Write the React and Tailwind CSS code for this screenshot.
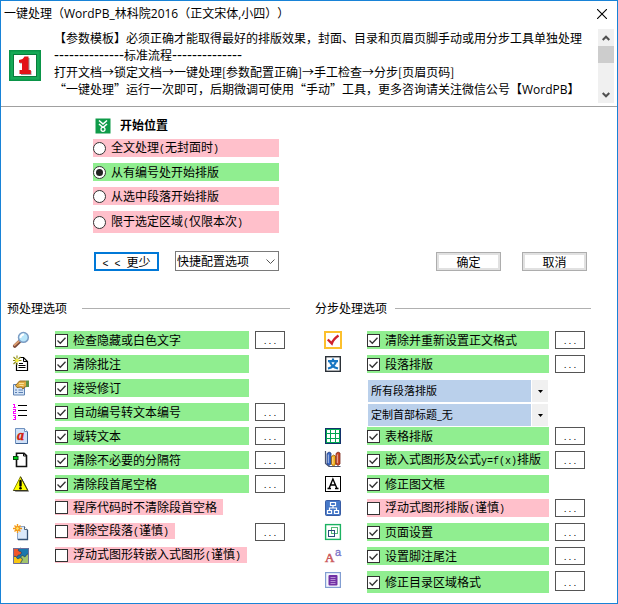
import React from 'react';

const UI = "font-['Open_Sans','Noto_Sans_CJK_SC',sans-serif]";
const CJK = "font-['Noto_Sans_CJK_SC',sans-serif]";

/* Half-width characters take exactly half of a 12px ideograph. */
function Label({ children }) {
  return (
    <span className="whitespace-pre">
      {children.split(/([\x20-\x7e]+)/).map((part, i) =>
        i % 2 ? (
          <span key={i} className="font-['Liberation_Mono',monospace] text-[10px]">{part}</span>
        ) : (
          part
        )
      )}
    </span>
  );
}

function Svg({ children, crisp }) {
  return (
    <svg viewBox="0 0 16 16" className="size-4 shrink-0 overflow-visible" aria-hidden="true" shapeRendering={crisp ? 'crispEdges' : 'auto'}>
      {children}
    </svg>
  );
}

const icons = {
  magnifier: (
    <Svg>
      <path d="M6.5 9.5 1.8 14" stroke="#7d4a3a" strokeWidth="3.8" strokeLinecap="round" />
      <path d="M6 9.2 1.6 13.2" stroke="#e0a070" strokeWidth="1.8" strokeLinecap="round" />
      <circle cx="10.4" cy="5.4" r="4.9" fill="#b9e6fa" stroke="#7c9dc4" strokeWidth="1.5" />
      <path d="M7.6 6a3 3 0 0 1 3.4-3.4" stroke="#fff" strokeWidth="2" fill="none" />
    </Svg>
  ),
  newNote: (
    <Svg>
      <path d="M7 1.5h3.500l4 4v9h-11V7" fill="#fff" stroke="#000" strokeWidth="1.2" />
      <path d="M10.500 1.500v4h4" fill="none" stroke="#000" />
      <path d="M6 7.500h4M5.500 9.500h7M5.500 11.500h7" stroke="#000" />
      <path d="M0 4.500h2.500M5.500 4.500h3M4 -.5v3M4 6.500v2.500M.5 1l2.500 2.500M7.500 1 5.500 3M.5 8l2.500-2.500" stroke="#8c8c14" strokeWidth="1.100" />
      <rect x="2.500" y="3" width="3" height="3" fill="#f5f03c" />
    </Svg>
  ),
  accept: (
    <Svg>
      <path d="M.5 4.5h11v10.500h-11z" fill="#d3e3f6" stroke="#5f82b3" />
      <path d="M2 10h2M5.500 10H10M2 12.500h2M5.500 12.500H10" stroke="#5b80b4" strokeWidth="1.200" />
      <path d="M2.500 5.500 6.500 1h6l1.500 1v4.500l-2.500.5-1.500 2-1.500-2L4 7.500z" fill="#e2ae43" stroke="#8a5f17" strokeWidth=".9" />
      <path d="M6 3.500h5M6.500 5.500h4" stroke="#fbe19a" />
      <path d="M13 .5h3v6.500h-3z" fill="#5f9147" />
    </Svg>
  ),
  numbers: (
    <Svg crisp>
      <path d="M1 0h1v3h1v1H0V3h1V1H0V0zM0 5h3v3H1v1h2v1H0V7h2V6H0zM0 11h3v5H0v-1h2v-1H1v-1h1v-1H0z" fill="#f0f" />
      <path d="M5 1h9v1H5zM5 6h9v1H5zM5 11h9v1H5z" fill="#000" />
    </Svg>
  ),
  field: (
    <Svg>
      <path d="M2.500.5h9l3 3v12h-12z" fill="#cfe1f8" stroke="#6f91bf" />
      <path d="M14.500 4v11.500H3" fill="none" stroke="#3f6497" />
      <path d="M11.500.5v3h3" fill="#fff" stroke="#6f91bf" />
      <text x="4" y="12" fontSize="14" fontWeight="700" fontStyle="italic" fontFamily="Liberation Serif, serif" fill="#d0220d" stroke="#d0220d" strokeWidth=".4">a</text>
    </Svg>
  ),
  breaks: (
    <Svg>
      <path d="M3.500 1.200h7.500l2.500 2.500v10.800h-10z" fill="#fff" stroke="#111" strokeWidth="1.600" />
      <path d="M10.500 1.500v2.500h2.500" fill="none" stroke="#111" />
      <rect x=".5" y="4.500" width="4.500" height="3" fill="#00d21a" stroke="#064b0b" />
    </Svg>
  ),
  warning: (
    <Svg>
      <path d="M9 2.500 16 15.800H2z" fill="#777" />
      <path d="M7.500.7 14.800 14.500H.4z" fill="#ff0" stroke="#8b8b00" />
      <path d="m7.500.7 7.300 13.800H.4" fill="none" stroke="#222" strokeWidth=".8" />
      <path d="M7.500 5v4.500" stroke="#000" strokeWidth="2.400" strokeLinecap="round" />
      <circle cx="7.500" cy="12.200" r="1.300" />
    </Svg>
  ),
  blank: (
    <Svg>
      <path d="M4.500 2.500h7l3 3v10h-10z" fill="#dbe9fa" stroke="#8fa6c8" />
      <path d="M14.500 6v9.500H5" fill="none" stroke="#345275" strokeWidth="1.300" />
      <path d="M11.500 2.500v3h3" fill="#fff" stroke="#567" />
      <path d="M4.500 0v9M0 4.500h9M1.500 1.500l6 6M7.500 1.500l-6 6" stroke="#f59b17" strokeWidth="1.400" />
      <circle cx="4.500" cy="4.500" r="1.900" fill="#ffe25e" stroke="#f08c12" />
    </Svg>
  ),
  puzzle: (
    <Svg>
      <path d="M0 0h16v16H0z" fill="#1977ae" />
      <path d="M0 0h7.500c-3 1.500-3 3 0 3.500 1.500.5 1 3-1 3.500-2 0-2 1-2.500 2C3 7.500 1.500 8 0 9z" fill="#f0562b" />
      <path d="M0 9c1.500-1 3-1 3.500.5s2 1.500 3 .5c2-1 3.500 1 2.500 2.500S7.500 14.500 8 16H0z" fill="#f8c713" />
      <path d="M8 16c-.5-1.500.5-2.500 1-3.500.8-1.500-.5-3-1.500-3.500 1-1.500 2-2 3-1 .8 1 2 1 2.500-.5S15 6 16 6v10z" fill="#a2c46c" />
      <path d="M7.500 0c-3 1.500-3 3 0 3.500 1.500.5 1 3-1 3.500-2 0-2 1-2.500 2M0 9c1.500-1 3-1 3.500.5s2 1.500 3 .5c2-1 3.500 1 2.500 2.500S7.500 14.500 8 16M7.500 9c1-1.500 2-2 3-1 .8 1 2 1 2.500-.5S15 6 16 6" fill="none" stroke="#284866" strokeWidth=".9" />
      <path d="M.5.5h15v15H.5z" fill="none" stroke="#6a6f9e" />
    </Svg>
  ),
  redCheck: (
    <Svg>
      <rect x="0" y="0" width="16" height="16" fill="#fff" stroke="#fcc02d" strokeWidth="2" />
      <path d="m2.800 7.500 4 4C8 8 10.500 5.500 13.500 3.500" fill="none" stroke="#cf202b" strokeWidth="2.400" />
    </Svg>
  ),
  wen: (
    <Svg>
      <rect x=".7" y=".7" width="14.600" height="14.600" fill="#fff" stroke="#2b3138" strokeWidth="1.400" />
      <path d="M3 5.200h10M8 2.500V5M5 5.500c1 4 4 6 8 7M11 5.500c-1 4-4 6-8 7" fill="none" stroke="#1775c2" strokeWidth="2.200" />
    </Svg>
  ),
  table: (
    <Svg crisp>
      <path d="M0 0h16v16H0z" fill="#12326b" />
      <path d="M1 1h14v14H1z" fill="#00a650" />
      <path d="M2 2h3v3H2zM6 2h4v3H6zM11 2h3v3h-3zM2 6h3v4H2zM6 6h4v4H6zM11 6h3v4h-3zM2 11h3v3H2zM6 11h4v3H6zM11 11h3v3h-3z" fill="#fff" />
    </Svg>
  ),
  chart: (
    <Svg>
      <path d="M.5-1v12.500l3.500 3H15.500" fill="none" stroke="#4a5470" strokeWidth="1.200" />
      <path d="M2 1.500 4 0l2 1v11l-2 1.500L2 12z" fill="#3a68c4" stroke="#23407f" strokeWidth=".8" />
      <path d="M6.500 4.500 8.500 3l2 1v8.500l-2 1.500-2-1.500z" fill="#f5b01c" stroke="#8f5c0d" strokeWidth=".8" />
      <path d="m11 1.500 2-1.500 2 1v11l-2 1.500L11 12z" fill="#cc4a2a" stroke="#7a2416" strokeWidth=".8" />
      <path d="M3.300 2.500V11M7.800 5v7M12.300 2.500V11" stroke="#fff" strokeOpacity=".6" />
    </Svg>
  ),
  frame: (
    <Svg>
      <rect x=".5" y=".5" width="15" height="15" fill="#fff" stroke="#000" />
      <path d="m4 12.500 3.900-9.500L12 12.500M5.300 9h5.400M2.500 12.500H6M10 12.500h3.500" fill="none" stroke="#000" strokeWidth="1.400" />
    </Svg>
  ),
  float: (
    <Svg>
      <rect x=".5" y=".5" width="15" height="15" rx="1" fill="#4779c9" stroke="#385ca4" />
      <path d="M5.500 2.500h5v3h-5zM2.500 10.500h4v3h-4zM9.500 10.500h4v3h-4zM8 5.500V8M4.500 10.500V8h7v2.500" fill="none" stroke="#fff" strokeWidth="1.200" />
    </Svg>
  ),
  page: (
    <Svg>
      <rect x=".6" y=".6" width="14.800" height="14.800" fill="#fff" stroke="#1bb261" strokeWidth="1.400" />
      <rect x="6.500" y="3.500" width="6" height="6" fill="none" stroke="#55b877" />
      <rect x="3.500" y="6.500" width="6" height="6" fill="none" stroke="#2c4a7b" />
    </Svg>
  ),
  footnote: (
    <Svg>
      <text x="0" y="14" fontSize="13" fontFamily="Liberation Serif, serif" fill="#cb5b5e" stroke="#cb5b5e" strokeWidth=".6">A</text>
      <text x="10" y="8" fontSize="11" fontFamily="Liberation Sans, sans-serif" fill="#7770c8" stroke="#7770c8" strokeWidth=".3">a</text>
    </Svg>
  ),
  toc: (
    <Svg>
      <rect x=".6" y=".6" width="14.800" height="14.800" fill="#f4f7fd" stroke="#829ed2" strokeWidth="1.200" />
      <rect x="3.500" y="3" width="9" height="10.500" rx="1" fill="#7131a4" />
      <path d="M5.500 5.500h5M5.500 7.500h5M5.500 9.500h5M5.500 11.500h5" stroke="#c7a4df" strokeWidth=".8" />
    </Svg>
  ),
};

const leftRows = [
  ['magnifier', '检查隐藏或白色文字', true, true],
  ['newNote', '清除批注', true, false],
  ['accept', '接受修订', true, false],
  ['numbers', '自动编号转文本编号', true, true],
  ['field', '域转文本', true, true],
  ['breaks', '清除不必要的分隔符', true, true],
  ['warning', '清除段首尾空格', true, true],
  [null, '程序代码时不清除段首空格', false, false, true],
  ['blank', '清除空段落(谨慎)', false, true, true],
  ['puzzle', '浮动式图形转嵌入式图形(谨慎)', false, false, true],
];

const rightTop = [
  ['redCheck', '清除并重新设置正文格式', true, true],
  ['wen', '段落排版', true, true],
];

const rightRest = [
  ['table', '表格排版', true, true],
  ['chart', '嵌入式图形及公式y=f(x)排版', true, true],
  ['frame', '修正图文框', true, false],
  ['float', '浮动式图形排版(谨慎)', false, true],
  ['page', '页面设置', true, true],
  ['footnote', '设置脚注尾注', true, true],
  ['toc', '修正目录区域格式', true, true, false, true],
];

function OptionRow({ row }) {
  const [icon, text, checked, more, compact, tall] = row;
  return (
    <li className="flex h-6 items-start">
      <span className="mr-[26px] w-4 shrink-0 pt-px">{icon && icons[icon]}</span>
      <div className="min-w-0 flex-1">
        <label
          className={`flex items-center gap-[5px] ${checked ? 'bg-[#90ee90]' : 'bg-[#ffc0cb]'} ${
            compact ? 'h-4 w-fit pr-[6px]' : tall ? 'h-[22px]' : 'h-[18px]'
          }`}
        >
          <span className="grid shrink-0">
            <input
              type="checkbox"
              defaultChecked={checked}
              className="peer col-start-1 row-start-1 size-[13px] appearance-none border border-[#333] bg-white"
            />
            <svg viewBox="0 0 13 13" className="pointer-events-none invisible col-start-1 row-start-1 size-[13px] peer-checked:visible" aria-hidden="true">
              <path d="m2.500 6.500 2.800 2.800 5.200-5.600" fill="none" stroke="#333" strokeWidth="1.300" />
            </svg>
          </span>
          <Label>{text}</Label>
        </label>
      </div>
      <span className="ml-[6px] w-[30px] shrink-0">
        {more && (
          <button
            type="button"
            aria-label={`${text} ...`}
            className={`flex w-full items-end justify-center border border-[#555] bg-white pb-px font-['Liberation_Mono',monospace] text-[8px] leading-[10px] ${
              tall ? 'h-5' : 'h-[18px]'
            }`}
          >
            ...
          </button>
        )}
      </span>
    </li>
  );
}

function Combo({ label, value }) {
  return (
    <div className="grid h-[22px] grid-cols-[1fr_16px] gap-x-px">
      <select
        aria-label={label}
        className={`col-span-2 col-start-1 row-start-1 appearance-none bg-[#bad0eb] pl-[3px] text-[11px] ${UI}`}
      >
        <option>{value}</option>
      </select>
      <span className="pointer-events-none col-start-2 row-start-1 -ml-px flex items-center justify-center border-l border-white bg-[#f0f0f0]">
        <svg viewBox="0 0 5 3" className="h-[3px] w-[5px]" aria-hidden="true">
          <path d="M0 0h5L2.500 3z" />
        </svg>
      </span>
    </div>
  );
}

function SectionTitle({ children, className }) {
  return (
    <h2 className={`flex h-4 items-center ${className}`}>
      {children}
      <span className="h-px flex-1 bg-[#b0b0b0]" />
    </h2>
  );
}

const startOptions = [
  ['全文处理(无封面时)', 'bg-[#ffc0cb] h-[18px]'],
  ['从有编号处开始排版', 'bg-[#90ee90] h-[18px]'],
  ['从选中段落开始排版', 'bg-[#ffc0cb] h-[18px]'],
  ['限于选定区域(仅限本次)', 'bg-[#ffc0cb] h-[22px]'],
];

const pushButton =
  'h-[19px] w-[65px] border border-[#adadad] bg-white leading-[17px] shadow-[inset_0_0_0_2px_#e1e1e1]';

export default function App() {
  return (
    <main className={`min-h-screen border border-[#1883d7] bg-white pb-[7px] text-[12px] leading-4 text-black [text-spacing-trim:space-all] ${CJK}`}>
      <header className="flex h-[26px] items-center justify-between pr-[10px] pl-[3px]">
        <h1 className={`whitespace-nowrap ${UI}`}>一键处理（WordPB_林科院2016（正文宋体,小四））</h1>
        <button type="button" aria-label="关闭">
          <svg viewBox="0 0 10 10" className="size-[10px]" aria-hidden="true">
            <path d="m0 0 10 10M10 0 0 10" stroke="#000" strokeWidth="1.100" />
          </svg>
        </button>
      </header>

      <section className="mt-[2px] flex border-b border-[#a0a0a0] pr-[3px] pb-[3px] pl-2">
        <svg viewBox="0 0 32 31" className="mt-[21px] mr-[13px] h-[31px] w-8 shrink-0" aria-hidden="true">
          <rect width="32" height="31" fill="#0a9448" />
          <rect x="1.500" y="1.500" width="29" height="28" fill="#15a956" />
          <rect x="4.500" y="4.500" width="23" height="22" fill="#fff" stroke="#087c3b" />
          <path d="M11 11.500c3-.3 4.500-1.500 5.500-3.500h4v13h2v4H12v-4h2.500v-7.500H11z" fill="#999" />
          <path d="M10 10c3-.3 4.500-1.500 5.500-3.500h4v13.500h2.300v4H10.500v-4H13v-7.300h-3z" fill="#e31318" />
        </svg>
        <div className="min-w-0 flex-1 overflow-hidden leading-[17px] whitespace-nowrap">
          <p>【参数模板】必须正确才能取得最好的排版效果，封面、目录和页眉页脚手动或用分步工具单独处理</p>
          <p>
            <span className="font-['Liberation_Sans',sans-serif] text-[15px] leading-none">--------------</span>
            标准流程
            <span className="font-['Liberation_Sans',sans-serif] text-[15px] leading-none">--------------</span>
          </p>
          <p>打开文档→锁定文档→一键处理[参数配置正确]→手工检查→分步[页眉页码]</p>
          <p>
            “一键处理”运行一次即可，后期微调可使用“手动”工具，更多咨询请关注微信公号【<span className={UI}>WordPB</span>】
          </p>
        </div>
        <div className="flex h-[74px] w-4 shrink-0 flex-col items-stretch bg-[#f0f0f0]">
          <button type="button" aria-label="向上滚动" className="flex h-[17px] items-center justify-center">
            <svg viewBox="0 0 8 6" className="h-[6px] w-2" aria-hidden="true">
              <path d="m.7 5 3.300-3.300L7.300 5" fill="none" stroke="#505050" strokeWidth="2" />
            </svg>
          </button>
          <span className="h-[17px] bg-[#cdcdcd]" />
          <span className="flex-1" />
          <button type="button" aria-label="向下滚动" className="flex h-[17px] items-center justify-center">
            <svg viewBox="0 0 8 6" className="h-[6px] w-2" aria-hidden="true">
              <path d="m.7 1 3.300 3.300L7.300 1" fill="none" stroke="#505050" strokeWidth="2" />
            </svg>
          </button>
        </div>
      </section>

      <fieldset className="mt-[11px] ml-[92px] w-[186px]">
        <legend className={`mb-[5px] flex h-4 items-center gap-[9px] pl-[2px] font-bold ${UI}`}>
          <svg viewBox="0 0 16 16" className="size-4" aria-hidden="true">
            <rect x=".5" y=".5" width="15" height="15" fill="#0f9b49" />
            <path d="m4 2.500 4 3.500 4-3.500M4 6l4 3.500L12 6" fill="none" stroke="#fff" strokeWidth="1.600" />
            <circle cx="8" cy="11.300" r="2" fill="#0f9b49" stroke="#fff" strokeWidth="1.300" />
          </svg>
          开始位置
        </legend>
        <div className="flex flex-col gap-[6px]">
          {startOptions.map(([text, style], i) => (
            <label key={text} className={`flex items-center gap-[5px] ${style}`}>
              <span className="grid">
                <input
                  type="radio"
                  name="start"
                  defaultChecked={i === 1}
                  className="peer col-start-1 row-start-1 size-[13px] appearance-none rounded-full border border-[#333] bg-white"
                />
                <span className="pointer-events-none invisible col-start-1 row-start-1 m-[3px] size-[7px] rounded-full bg-[#222] peer-checked:visible" />
              </span>
              <Label>{text}</Label>
            </label>
          ))}
        </div>
      </fieldset>

      <div className="mt-[18px] flex h-5 items-end pr-[30px] pl-[93px]">
        <button type="button" className="h-[19px] w-[65px] border-2 border-[#0078d7] bg-white leading-[15px]">
          <Label>{'< < 更少'}</Label>
        </button>
        <div className="ml-4 grid h-5 w-[104px]">
          <select aria-label="快捷配置选项" className="col-start-1 row-start-1 appearance-none border border-[#7a7a7a] bg-white pl-px leading-4">
            <option>快捷配置选项</option>
          </select>
          <svg viewBox="0 0 9 5" className="pointer-events-none col-start-1 row-start-1 mr-1 h-[5px] w-[9px] self-center justify-self-end" aria-hidden="true">
            <path d="m.5.5 4 4 4-4" fill="none" stroke="#555" />
          </svg>
        </div>
        <button type="button" className={`ml-auto ${pushButton}`}>确定</button>
        <button type="button" className={`ml-[21px] ${pushButton}`}>取消</button>
      </div>

      <div className="mt-[29px] grid grid-cols-2">
        <section>
          <SectionTitle className="gap-[15px] pr-[19px] pl-[6px]">预处理选项</SectionTitle>
          <ul className="mt-[15px] pr-6 pl-3">
            {leftRows.map((row) => (
              <OptionRow key={row[1]} row={row} />
            ))}
          </ul>
        </section>
        <section>
          <SectionTitle className="gap-2 pr-[26px] pl-[6px]">分步处理选项</SectionTitle>
          <ul className="mt-[15px] pr-8 pl-4">
            {rightTop.map((row) => (
              <OptionRow key={row[1]} row={row} />
            ))}
            <li className="flex h-12 flex-col gap-[2px] pt-px pr-[37px] pl-[43px]">
              <Combo label="段落范围" value="所有段落排版" />
              <Combo label="首部标题" value="定制首部标题_无" />
            </li>
            {rightRest.map((row) => (
              <OptionRow key={row[1]} row={row} />
            ))}
          </ul>
        </section>
      </div>
    </main>
  );
}
